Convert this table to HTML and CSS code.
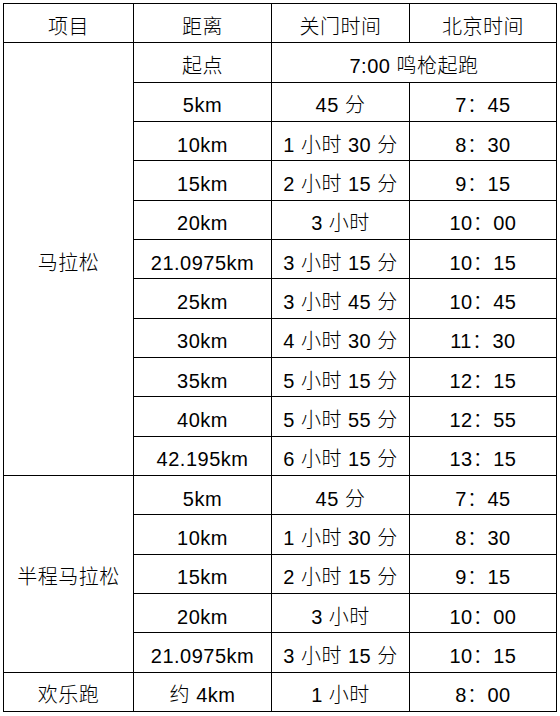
FILE: index.html
```html
<!DOCTYPE html>
<html lang="zh-CN">
<head>
<meta charset="utf-8">
<title>关门时间</title>
<link rel="stylesheet" href="styles.css">
</head>
<body>
<table class="schedule">
  <colgroup>
    <col class="c1"><col class="c2"><col class="c3"><col class="c4">
  </colgroup>
  <thead>
    <tr><th>项目</th><th>距离</th><th>关门时间</th><th>北京时间</th></tr>
  </thead>
  <tbody>
    <tr><td class="group" rowspan="11">马拉松</td><td>起点</td><td colspan="2">7:00 鸣枪起跑</td></tr>
    <tr><td>5km</td><td>45 分</td><td>7：45</td></tr>
    <tr><td>10km</td><td>1 小时 30 分</td><td>8：30</td></tr>
    <tr><td>15km</td><td>2 小时 15 分</td><td>9：15</td></tr>
    <tr><td>20km</td><td>3 小时</td><td>10：00</td></tr>
    <tr><td>21.0975km</td><td>3 小时 15 分</td><td>10：15</td></tr>
    <tr><td>25km</td><td>3 小时 45 分</td><td>10：45</td></tr>
    <tr><td>30km</td><td>4 小时 30 分</td><td>11：30</td></tr>
    <tr><td>35km</td><td>5 小时 15 分</td><td>12：15</td></tr>
    <tr><td>40km</td><td>5 小时 55 分</td><td>12：55</td></tr>
    <tr><td>42.195km</td><td>6 小时 15 分</td><td>13：15</td></tr>
    <tr><td class="group" rowspan="5">半程马拉松</td><td>5km</td><td>45 分</td><td>7：45</td></tr>
    <tr><td>10km</td><td>1 小时 30 分</td><td>8：30</td></tr>
    <tr><td>15km</td><td>2 小时 15 分</td><td>9：15</td></tr>
    <tr><td>20km</td><td>3 小时</td><td>10：00</td></tr>
    <tr><td>21.0975km</td><td>3 小时 15 分</td><td>10：15</td></tr>
    <tr><td class="group">欢乐跑</td><td>约 4km</td><td>1 小时</td><td>8：00</td></tr>
  </tbody>
</table>
</body>
</html>
```
FILE: styles.css
```css
html, body {
  margin: 0;
  padding: 0;
  background: #ffffff;
}
body {
  padding: 3px 0 0 3px;
  font-family: "Liberation Sans", "Noto Sans CJK SC", sans-serif;
  font-size: 20px;
  color: #000000;
}
.schedule {
  border-collapse: collapse;
  table-layout: fixed;
  width: 554px;
}
.c1 { width: 130px; }
.c2 { width: 138px; }
.c3 { width: 138px; }
.c4 { width: 147px; }
.schedule tr {
  height: 39.33px;
}
.schedule th,
.schedule td {
  border: 1px solid #000000;
  padding: 7px 0 0 0;
  text-align: center;
  vertical-align: middle;
  font-weight: 300;
  line-height: 24px;
  letter-spacing: 0.5px;
  white-space: nowrap;
}
```
